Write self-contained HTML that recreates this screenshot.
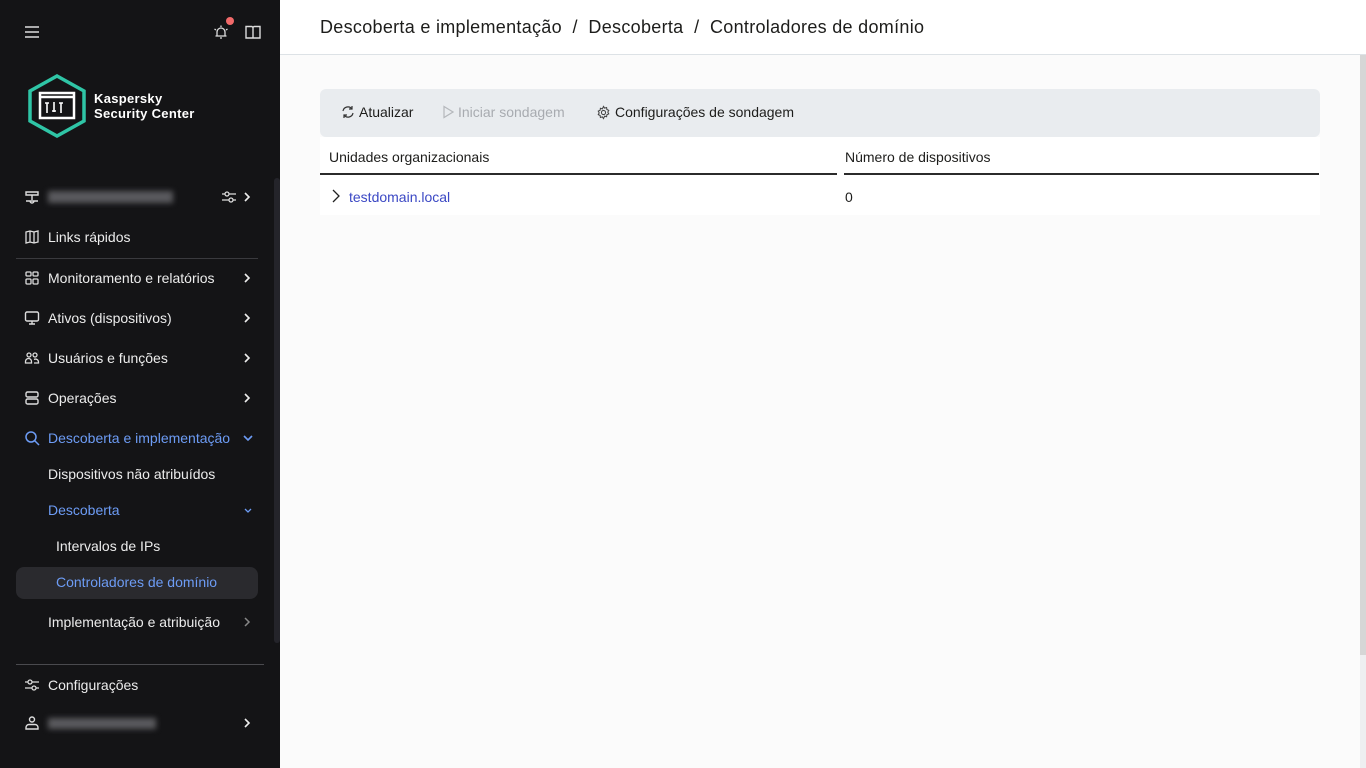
<!DOCTYPE html>
<html><head><meta charset="utf-8">
<style>
*{box-sizing:border-box;margin:0;padding:0}
body{width:1366px;height:768px;overflow:hidden;font-family:"Liberation Sans",sans-serif;background:#fbfbfb;position:relative;color:#1d1d1b}
#side{position:absolute;left:0;top:0;width:280px;height:768px;background:#141416;color:#eaeaea}
.it{position:absolute;left:24px;height:20px;display:flex;align-items:center;font-size:14px;color:#ececec}
.it svg{width:16px;height:16px;margin-right:8px;flex:none}
.chev{position:absolute;left:243px;width:8px;height:10px}
.blue{color:#6d9cf5}
#main{position:absolute;left:280px;top:0;right:0;bottom:0}
#hdr{height:55px;background:#fff;border-bottom:1px solid #dde2e6;padding-left:40px;display:flex;align-items:center;font-size:18px;letter-spacing:0.3px;color:#1d1d1b}
#tb{position:absolute;left:40px;top:89px;width:1000px;height:48px;background:#e9ecef;border-radius:6px;font-size:14px}
#tb span{position:absolute;top:15px;display:flex;align-items:center}
</style></head><body>
<div id="side">
 <svg style="position:absolute;left:25px;top:26px" width="14" height="12" viewBox="0 0 14 12"><path d="M0 1h14M0 6h14M0 11h14" stroke="#ddd" stroke-width="1.6"/></svg>
 <svg style="position:absolute;left:213px;top:24px" width="16" height="16" viewBox="0 0 16 16" fill="none" stroke="#ddd" stroke-width="1.3"><path d="M4 12V8a4 4 0 0 1 8 0v4M2.5 12h11M7 14h2M1.5 5l1.5 1M14.5 5l-1.5 1M8 1.5v1.5"/></svg>
 <div style="position:absolute;left:226px;top:17px;width:8px;height:8px;border-radius:50%;background:#f26a6a"></div>
 <svg style="position:absolute;left:245px;top:25px" width="16" height="14" viewBox="0 0 16 14" fill="none" stroke="#ddd" stroke-width="1.4"><path d="M1 1.5h5.5a1.5 1.5 0 0 1 1.5 1.5v10H1zM15 1.5H9.5A1.5 1.5 0 0 0 8 3v10h7z"/></svg>
 <svg style="position:absolute;left:27px;top:74px" width="60" height="64" viewBox="0 0 60 64"><polygon points="30,2 57,17 57,47 30,62 3,47 3,17" fill="none" stroke="#2fc5a6" stroke-width="3.5"/><rect x="13" y="19" width="34" height="25" fill="none" stroke="#fff" stroke-width="2.5"/><path d="M13 23h34" stroke="#fff" stroke-width="2.5"/><path d="M20 29v10M27 28v10M34 29v10M18 29h4M25 37h4M32 29h4" stroke="#fff" stroke-width="1.6"/></svg>
 <div style="position:absolute;left:94px;top:91px;font-size:13px;font-weight:bold;line-height:15px;letter-spacing:0.3px;color:#fff">Kaspersky<br>Security Center</div>
 <div style="position:absolute;left:274px;top:178px;width:6px;height:465px;background:#24242a;border-radius:3px"></div>
 <div class="it" style="top:187px"><svg viewBox="0 0 16 16" fill="none" stroke="#ddd" stroke-width="1.4"><path d="M2 3h12v3H2zM8 6v5M2 12h12M6 12a2 2 0 0 0 4 0"/></svg><span style="width:125px;height:12px;background:#5a5a5e;filter:blur(3px);display:inline-block"></span></div>
 <svg style="position:absolute;left:221px;top:189px" width="16" height="16" viewBox="0 0 16 16" fill="none" stroke="#ddd" stroke-width="1.3"><path d="M1 5h14M1 11h14"/><circle cx="6" cy="5" r="2" fill="#141416"/><circle cx="10" cy="11" r="2" fill="#141416"/></svg>
 <svg class="chev" style="top:192px" viewBox="0 0 8 10"><path d="M2 1l4 4-4 4" stroke="#eee" stroke-width="1.6" fill="none"/></svg>
 <div class="it" style="top:227px"><svg viewBox="0 0 16 16" fill="none" stroke="#ddd" stroke-width="1.3"><path d="M2 3l4-1 4 1 4-1v11l-4 1-4-1-4 1zM6 2v11M10 3v11"/></svg>Links rápidos</div>
 <div style="position:absolute;left:16px;top:258px;width:242px;height:1px;background:#3a3a3e"></div>
 <div class="it" style="top:268px"><svg viewBox="0 0 16 16" fill="none" stroke="#ddd" stroke-width="1.3"><rect x="2" y="2" width="5" height="4" rx="1"/><rect x="9" y="2" width="5" height="4" rx="1"/><rect x="2" y="9" width="5" height="5" rx="1"/><rect x="9" y="9" width="5" height="5" rx="1"/></svg>Monitoramento e relatórios</div>
 <svg class="chev" style="top:273px" viewBox="0 0 8 10"><path d="M2 1l4 4-4 4" stroke="#eee" stroke-width="1.6" fill="none"/></svg>
 <div class="it" style="top:308px"><svg viewBox="0 0 16 16" fill="none" stroke="#ddd" stroke-width="1.4"><rect x="1.5" y="2" width="13" height="9" rx="1.5"/><path d="M8 11v3M5 14h6"/></svg>Ativos (dispositivos)</div>
 <svg class="chev" style="top:313px" viewBox="0 0 8 10"><path d="M2 1l4 4-4 4" stroke="#eee" stroke-width="1.6" fill="none"/></svg>
 <div class="it" style="top:348px"><svg viewBox="0 0 16 16" fill="none" stroke="#ddd" stroke-width="1.3"><circle cx="5" cy="5" r="2"/><circle cx="11" cy="5" r="2"/><path d="M1.5 13v-1.5a3 3 0 0 1 6 0V13zM10 9.5a3 3 0 0 1 4.5 2.5V13H10"/></svg>Usuários e funções</div>
 <svg class="chev" style="top:353px" viewBox="0 0 8 10"><path d="M2 1l4 4-4 4" stroke="#eee" stroke-width="1.6" fill="none"/></svg>
 <div class="it" style="top:388px"><svg viewBox="0 0 16 16" fill="none" stroke="#ddd" stroke-width="1.4"><rect x="2" y="2" width="12" height="5" rx="1.5"/><rect x="2" y="9" width="12" height="5" rx="1.5"/></svg>Operações</div>
 <svg class="chev" style="top:393px" viewBox="0 0 8 10"><path d="M2 1l4 4-4 4" stroke="#eee" stroke-width="1.6" fill="none"/></svg>
 <div class="it blue" style="top:428px"><svg viewBox="0 0 16 16" fill="none" stroke="#6d9cf5" stroke-width="1.5"><circle cx="7" cy="7" r="5"/><path d="M10.5 10.5L15 15"/></svg>Descoberta e implementação</div>
 <svg class="chev" style="top:433px;width:10px" viewBox="0 0 10 8"><path d="M1 2l4 4 4-4" stroke="#6d9cf5" stroke-width="1.6" fill="none"/></svg>
 <div class="it" style="top:464px;left:48px">Dispositivos não atribuídos</div>
 <div class="it blue" style="top:500px;left:48px">Descoberta</div>
 <svg class="chev" style="top:506px;width:10px" viewBox="0 0 10 8"><path d="M2 2l3 3 3-3" stroke="#6d9cf5" stroke-width="1.3" fill="none"/></svg>
 <div class="it" style="top:536px;left:56px">Intervalos de IPs</div>
 <div style="position:absolute;left:16px;top:567px;width:242px;height:32px;background:#2a2a2e;border-radius:8px"></div>
 <div class="it blue" style="top:572px;left:56px">Controladores de domínio</div>
 <div class="it" style="top:612px;left:48px">Implementação e atribuição</div>
 <svg class="chev" style="top:617px" viewBox="0 0 8 10"><path d="M2 1l4 4-4 4" stroke="#888" stroke-width="1.5" fill="none"/></svg>
 <div style="position:absolute;left:16px;top:664px;width:248px;height:1px;background:#4a4a4e"></div>
 <div class="it" style="top:675px"><svg viewBox="0 0 16 16" fill="none" stroke="#ddd" stroke-width="1.3"><path d="M1 5h14M1 11h14"/><circle cx="6" cy="5" r="2" fill="#141416"/><circle cx="10" cy="11" r="2" fill="#141416"/></svg>Configurações</div>
 <div class="it" style="top:713px"><svg viewBox="0 0 16 16" fill="none" stroke="#ddd" stroke-width="1.4"><circle cx="8" cy="4.5" r="2.5"/><path d="M2 14v-1.5A3 3 0 0 1 5 9.5h6a3 3 0 0 1 3 3V14z"/></svg><span style="width:108px;height:11px;background:#5a5a5e;filter:blur(3px);display:inline-block"></span></div>
 <svg class="chev" style="top:718px" viewBox="0 0 8 10"><path d="M2 1l4 4-4 4" stroke="#eee" stroke-width="1.6" fill="none"/></svg>
</div>
<div id="main">
 <div id="hdr">Descoberta e implementação&nbsp;&nbsp;/&nbsp;&nbsp;Descoberta&nbsp;&nbsp;/&nbsp;&nbsp;Controladores de domínio</div>
 <div id="tb">
  <span style="left:21px;color:#1d1d1b"><svg width="14" height="14" viewBox="0 0 14 14" fill="none" stroke="#333" stroke-width="1.2" style="margin-right:4px"><path d="M2 6a5 5 0 0 1 9-2M12 8a5 5 0 0 1-9 2M11 1v3H8M3 13v-3h3"/></svg>Atualizar</span>
  <span style="left:122px;color:#a8abb0"><svg width="12" height="14" viewBox="0 0 12 14" fill="none" stroke="#b5b8bc" stroke-width="1.2" style="margin-right:4px"><path d="M2 1.5l9 5.5-9 5.5z"/></svg>Iniciar sondagem</span>
  <span style="left:276px;color:#1d1d1b"><svg width="15" height="15" viewBox="0 0 16 16" fill="none" stroke="#444" stroke-width="1.1" style="margin-right:4px"><circle cx="8" cy="8" r="2.2"/><path d="M8 1.5l1.2 1.8 2.1-.6.3 2.1 2 .9-1 1.9 1 1.9-2 .9-.3 2.1-2.1-.6L8 14.5l-1.2-1.8-2.1.6-.3-2.1-2-.9 1-1.9-1-1.9 2-.9.3-2.1 2.1.6z"/></svg>Configurações de sondagem</span>
 </div>
 <div style="position:absolute;left:40px;top:137px;width:1000px;height:78px;background:#fff"></div>
 <div style="position:absolute;left:49px;top:149px;font-size:14px">Unidades organizacionais</div>
 <div style="position:absolute;left:565px;top:149px;font-size:14px">Número de dispositivos</div>
 <div style="position:absolute;left:40px;top:173px;width:517px;height:2px;background:#2b2b2b"></div>
 <div style="position:absolute;left:564px;top:173px;width:475px;height:2px;background:#2b2b2b"></div>
 <svg style="position:absolute;left:52px;top:189px" width="8" height="14" viewBox="0 0 8 14"><path d="M1 1l6 6-6 6" stroke="#222" stroke-width="1.3" fill="none"/></svg>
 <div style="position:absolute;left:69px;top:189px;font-size:14px;color:#3b48c4">testdomain.local</div>
 <div style="position:absolute;left:565px;top:189px;font-size:14px">0</div>
 <div style="position:absolute;left:1080px;top:55px;width:6px;height:713px;background:#eeeff1"></div>
 <div style="position:absolute;left:1080px;top:55px;width:6px;height:600px;background:#d6d6d6"></div>
</div>
</body></html>
